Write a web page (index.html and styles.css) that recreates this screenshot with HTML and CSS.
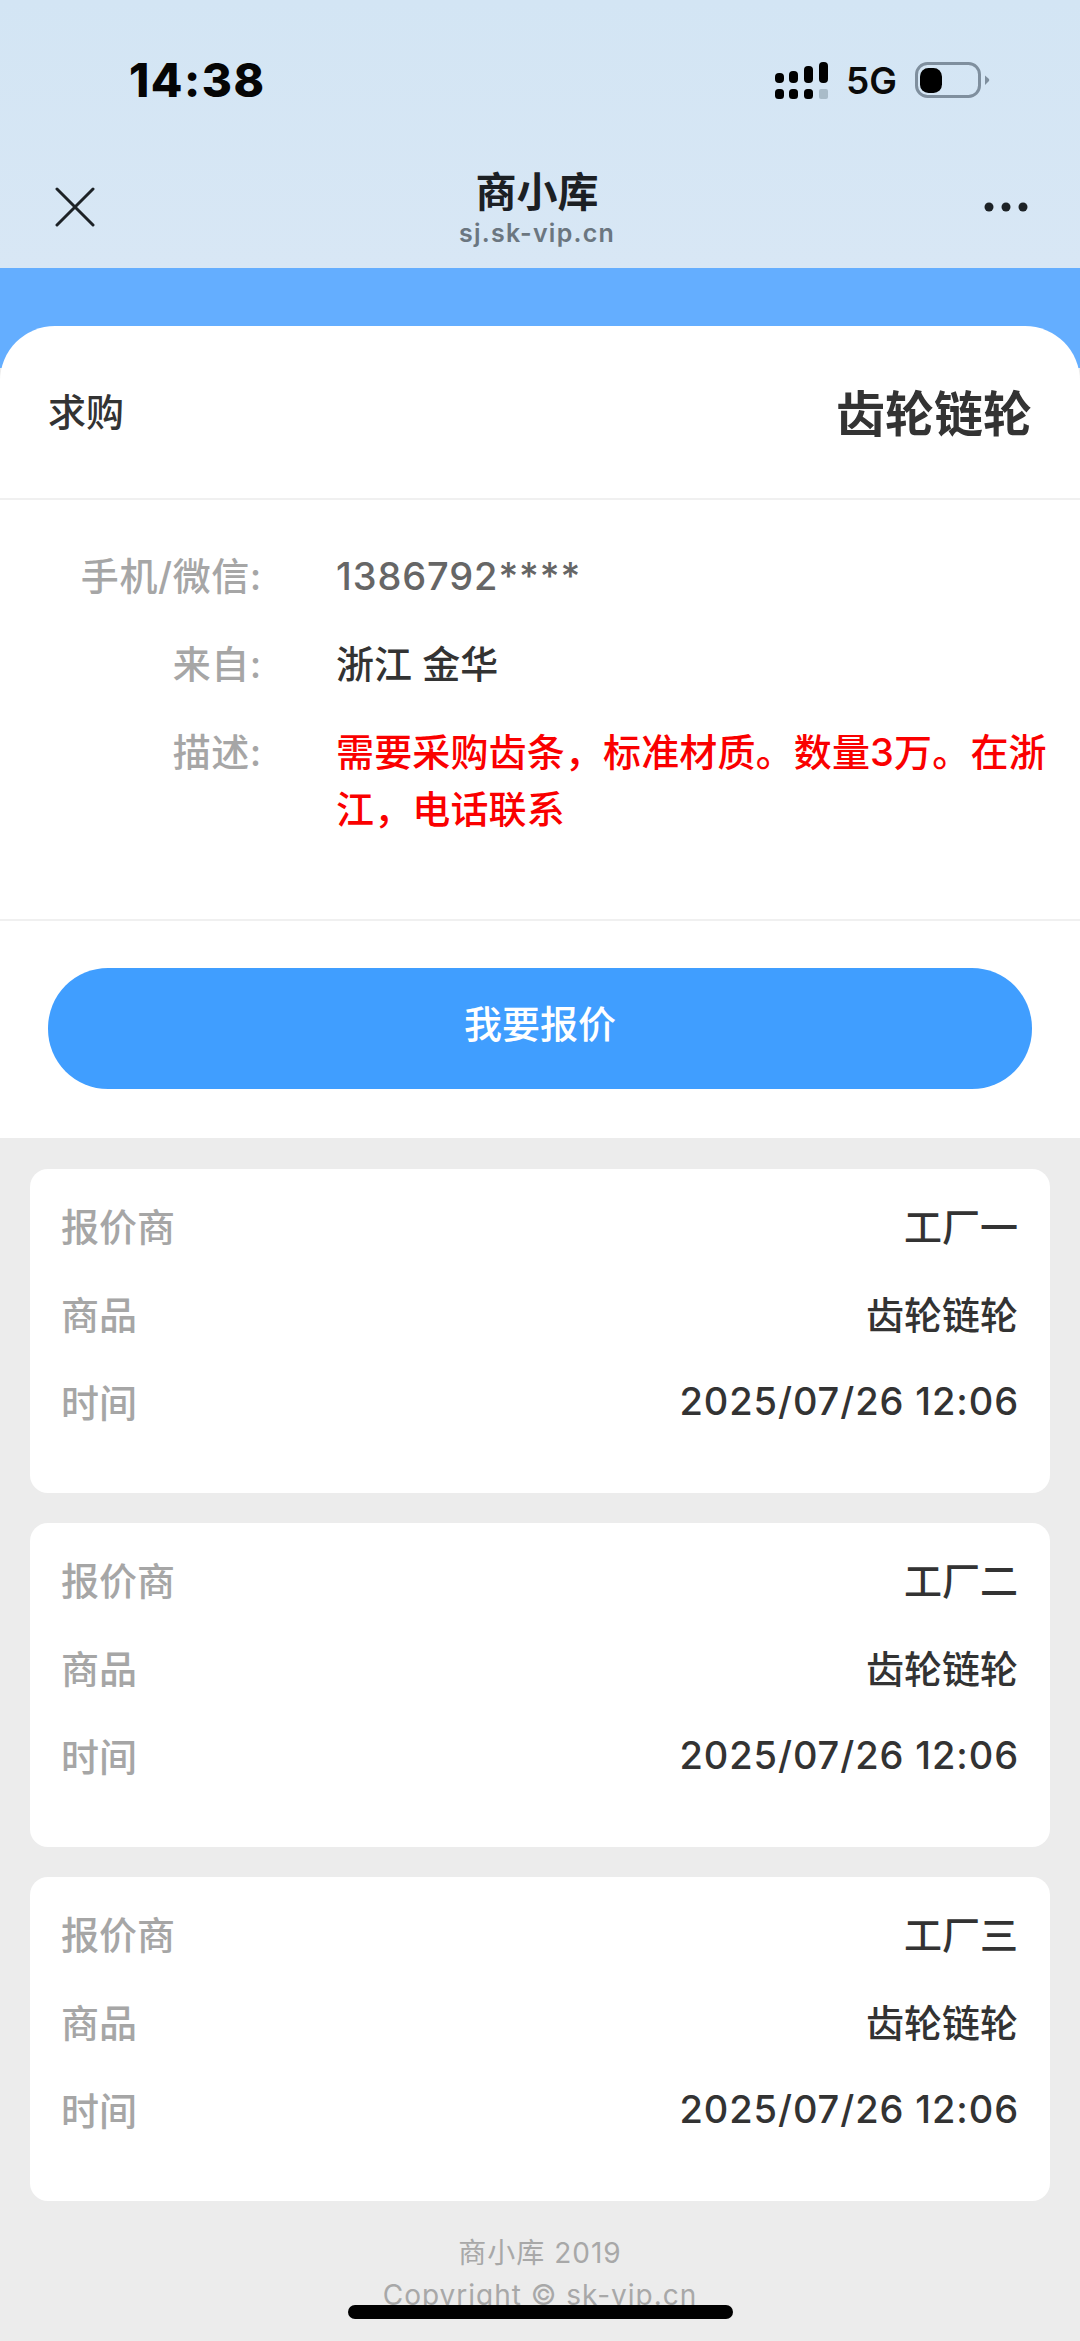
FILE: index.html
```html
<!DOCTYPE html>
<html lang="zh-CN">
<head>
<meta charset="utf-8">
<title>商小库</title>
<link rel="stylesheet" href="styles.css">
</head>
<body>
<div class="page">
  <header class="top">
    <div class="status">
      <span class="time">14:38</span>
      <div class="status-right">
        <svg class="signal" width="53" height="37" viewBox="0 0 53 37">
          <rect x="0" y="11" width="9" height="10" rx="4"/>
          <rect x="14" y="9" width="9" height="12" rx="4"/>
          <rect x="29" y="4" width="9" height="17" rx="4"/>
          <rect x="44" y="0" width="9" height="21" rx="4"/>
          <rect x="0" y="27" width="9" height="10" rx="3.5"/>
          <rect x="14" y="27" width="9" height="10" rx="3.5"/>
          <rect x="29" y="27" width="9" height="10" rx="3.5"/>
          <rect x="44" y="27" width="9" height="10" rx="2" fill="#a9bcc9"/>
        </svg>
        <span class="net">5G</span>
        <svg class="battery" width="75" height="36" viewBox="0 0 75 36">
          <rect x="1.5" y="1.5" width="63" height="33" rx="11" fill="none" stroke="#7f8f9e" stroke-width="3"/>
          <rect x="5" y="6" width="22" height="25" rx="8.5"/>
          <path d="M70 13.5 L74 17 Q74.500 18 74 19 L70 23 Z" fill="#7f8f9e"/>
        </svg>
      </div>
    </div>
    <nav class="nav">
      <svg class="close" width="40" height="40" viewBox="0 0 40 40">
        <path d="M2 2 L38 38 M38 2 L2 38" stroke="#1d2226" stroke-width="3" stroke-linecap="round" fill="none"/>
      </svg>
      <div class="nav-title">
        <div class="nav-name">商小库</div>
        <div class="nav-url">sj.sk-vip.cn</div>
      </div>
      <svg class="more" width="46" height="12" viewBox="0 0 46 12">
        <circle cx="6" cy="6" r="4.500"/><circle cx="23" cy="6" r="4.500"/><circle cx="40" cy="6" r="4.500"/>
      </svg>
    </nav>
  </header>
  <div class="band"></div>
  <main class="sheet">
    <div class="sheet-head">
      <span class="kind">求购</span>
      <span class="product">齿轮链轮</span>
    </div>
    <dl class="info">
      <div class="info-row"><dt>手机/微信:</dt><dd class="phone">1386792****</dd></div>
      <div class="info-row"><dt>来自:</dt><dd>浙江 金华</dd></div>
      <div class="info-row"><dt>描述:</dt><dd class="desc">需要采购齿条，标准材质。数量3万。在浙江，电话联系</dd></div>
    </dl>
    <div class="action"><button class="quote">我要报价</button></div>
  </main>
  <section class="list">
    <article class="card">
      <div class="row"><span class="k">报价商</span><span class="v">工厂一</span></div>
      <div class="row"><span class="k">商品</span><span class="v">齿轮链轮</span></div>
      <div class="row"><span class="k">时间</span><span class="v time-v">2025/07/26 12:06</span></div>
    </article>
    <article class="card">
      <div class="row"><span class="k">报价商</span><span class="v">工厂二</span></div>
      <div class="row"><span class="k">商品</span><span class="v">齿轮链轮</span></div>
      <div class="row"><span class="k">时间</span><span class="v time-v">2025/07/26 12:06</span></div>
    </article>
    <article class="card">
      <div class="row"><span class="k">报价商</span><span class="v">工厂三</span></div>
      <div class="row"><span class="k">商品</span><span class="v">齿轮链轮</span></div>
      <div class="row"><span class="k">时间</span><span class="v time-v">2025/07/26 12:06</span></div>
    </article>
  </section>
  <footer class="foot">
    <div>商小库 2019</div>
    <div>Copyright © sk-vip.cn</div>
  </footer>
  <div class="home"></div>
</div>
</body>
</html>
```
FILE: styles.css
```css
* { box-sizing: border-box; }
html, body { margin: 0; padding: 0; }
body {
  font-family: Inter, "Noto Sans CJK SC", sans-serif;
  background: #ececec;
}
.page {
  position: relative;
  width: 1080px;
  height: 2341px;
  overflow: hidden;
  background: #ececec;
}
.top {
  height: 268px;
  background: linear-gradient(180deg, #d3e5f4 0%, #d8e7f5 100%);
}
.status {
  height: 160px;
  display: flex;
  justify-content: space-between;
  align-items: center;
  padding: 0 90px 0 129px;
}
.time {
  font-size: 46px;
  font-weight: 800;
  letter-spacing: 1.5px;
  color: #050505;
  line-height: 1;
}
.status-right {
  display: flex;
  align-items: center;
}
.signal { display: block; margin-right: 18px; }
.net {
  font-size: 37px;
  font-weight: 600;
  color: #0a0a0a;
  margin-right: 18px;
  line-height: 1;
}
.battery { display: block; }
.nav {
  height: 108px;
  display: flex;
  justify-content: space-between;
  align-items: center;
  padding: 0 51px 0 55px;
}
.close { display: block; margin-bottom: 14px; }
.more { display: block; margin-bottom: 14px; fill: #1d2226; }
.nav-title {
  display: flex;
  flex-direction: column;
  align-items: center;
  margin: 0 4px 14px 0;
}
.nav-name {
  font-size: 41px;
  font-weight: 700;
  line-height: 52px;
  color: #1c2024;
}
.nav-url {
  font-size: 25px;
  font-weight: 600;
  line-height: 30px;
  color: #6b7680;
  letter-spacing: 1.25px;
}
.band {
  height: 100px;
  background: #64aeff;
}
.sheet {
  margin-top: -42px;
  background: #fff;
  border-radius: 55px 55px 0 0;
}
.sheet-head {
  height: 174px;
  display: flex;
  justify-content: space-between;
  align-items: center;
  padding: 0 48px 0 48px;
  border-bottom: 2px solid #f0f0f0;
}
.kind { font-size: 38px; font-weight: 500; color: #333; margin-bottom: 6px; }
.product { font-size: 49px; font-weight: 700; color: #333; margin-bottom: 3px; }
.info {
  margin: 0;
  height: 421px;
  padding-top: 48px;
  border-bottom: 2px solid #f0f0f0;
}
.info-row {
  display: flex;
  margin-bottom: 31px;
}
.info-row dt {
  flex: 0 0 262px;
  text-align: right;
  font-size: 38px;
  font-weight: 500;
  line-height: 57px;
  color: #a6a6a6;
  letter-spacing: 0.6px;
}
.info-row dd {
  flex: 1;
  margin: 0 30px 0 74px;
  font-size: 38px;
  font-weight: 500;
  line-height: 57px;
  color: #333;
}
.info-row .phone { color: #666; letter-spacing: 0.9px; }
.info-row .desc { color: #fa0000; letter-spacing: 0.15px; }
.action {
  height: 217px;
  padding: 47px 48px 0;
}
.quote {
  display: block;
  width: 100%;
  height: 121px;
  border: 0;
  border-radius: 60px;
  background: #409eff;
  color: #fff;
  font-family: inherit;
  font-size: 38px;
  font-weight: 500;
  padding: 0 0 14px;
}
.list {
  display: flex;
  flex-direction: column;
  gap: 30px;
  padding: 31px 30px 0;
}
.card {
  height: 324px;
  background: #fff;
  border-radius: 18px;
  padding: 11px 32px 0 31px;
}
.row {
  height: 88px;
  display: flex;
  justify-content: space-between;
  align-items: center;
}
.k { font-size: 38px; font-weight: 500; color: #a6a6a6; }
.v { font-size: 38px; font-weight: 500; color: #333; }
.time-v { letter-spacing: 0.9px; margin: 2px -1px 0 0; }
.foot {
  padding-top: 31px;
  text-align: center;
  font-size: 28px;
  line-height: 42px;
  color: #a8a8a8;
  letter-spacing: 1px;
}
.home {
  position: absolute;
  left: 348px;
  top: 2305px;
  width: 385px;
  height: 14px;
  border-radius: 7px;
  background: #000;
}
```
